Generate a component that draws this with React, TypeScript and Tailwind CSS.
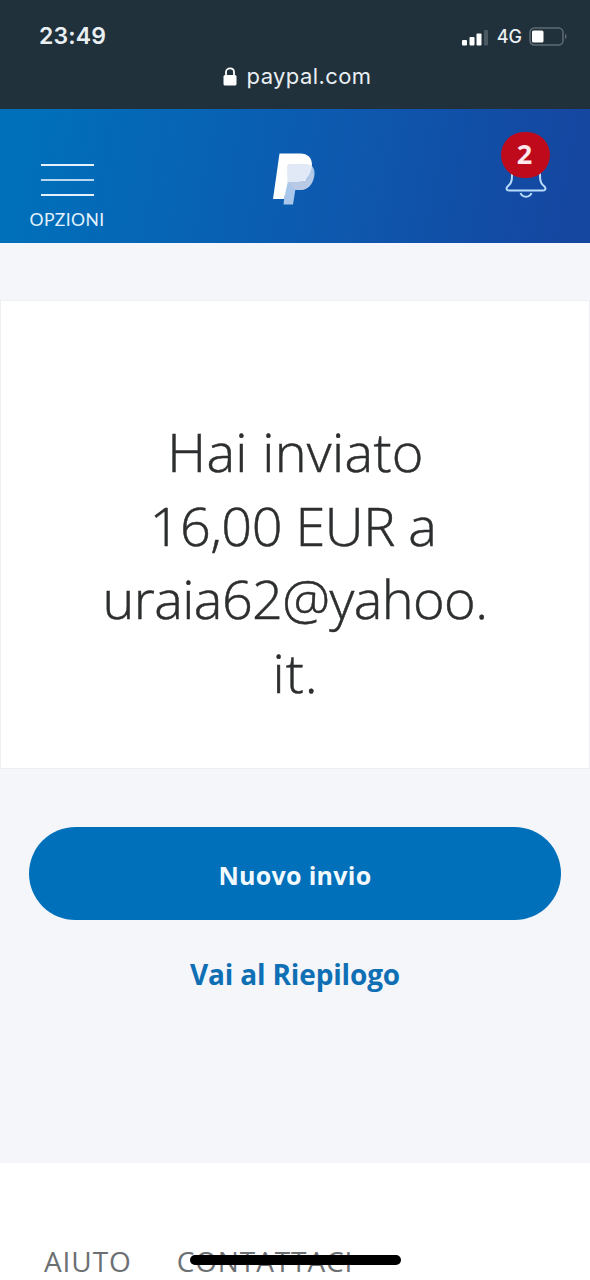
import React from 'react';

interface StatusBarProps {
  time: string;
  network: string;
}

const StatusBar: React.FC<StatusBarProps> = ({ time, network }) => (
  <div className="flex h-[109px] flex-col bg-[#21313c] text-[#e9eff3]">
    <div className="flex h-[58px] items-start justify-between pt-[22px] pr-[22px] pl-[39px]">
      <span className="font-['Inter'] text-[23px] leading-[28px] font-semibold tracking-[0.15px]">{time}</span>
      <div className="flex items-center pt-[3px]">
        <svg className="mr-[8px]" width="27" height="18" viewBox="0 0 27 18">
          <rect x="0" y="12" width="5" height="5.5" rx="1" fill="#fff" />
          <rect x="7.5" y="9" width="5" height="8.5" rx="1" fill="#fff" />
          <rect x="14.5" y="5.5" width="5" height="12" rx="1" fill="#fff" />
          <rect x="22" y="2" width="4" height="15.5" rx="1" fill="#4b5963" />
        </svg>
        <span className="pt-[1px] font-['Inter'] text-[18px] leading-[22px] font-medium">{network}</span>
        <svg className="ml-[7px]" width="39" height="19" viewBox="0 0 39 19">
          <rect x="1" y="1" width="33" height="17" rx="4.5" fill="none" stroke="#5f6b74" strokeWidth="1.5" />
          <rect x="3" y="3.5" width="11.5" height="12" rx="1.5" fill="#fff" />
          <path d="M36 7c2 .6 2 4.4 0 5z" fill="#5f6b74" />
        </svg>
      </div>
    </div>
    <div className="flex h-[36px] items-center justify-center gap-[10px] pl-[4px]">
      <svg width="14" height="19" viewBox="0 0 14 19">
        <path d="M3 9V5.2C3 .2 11 .2 11 5.2V9" fill="none" stroke="#fff" strokeWidth="1.8" />
        <rect x="0.5" y="8" width="13" height="10.5" rx="1.5" fill="#fff" />
      </svg>
      <span className="font-['Inter'] text-[22px] leading-[28px] tracking-[0.4px]">paypal.com</span>
    </div>
  </div>
);

const Logo = () => (
  <svg width="44" height="53" viewBox="0 0 44 53">
    <path d="M16 13h24c2.500 3 3 6 2.300 10-1.500 9-7 14-14 14h-5L21 51.500H11.500z" fill="#a9c7ea" />
    <path d="M16 29h13c5 0 8.500-4 10-9l3 1c-1 10-6.500 16-13.500 16h-5.500z" fill="#b7c9e4" />
    <path d="M7.500 0.500h21c7 0 11.500 4 11.500 11.500L33 28H16l-4 18H1z" fill="#fff" />
    <path d="M15 13c.5-1.300 1.500-2 3-2h15c3 0 5 .5 7 2-1.500 10-7 16-15 16h-9.500z" fill="#e1e9f6" />
  </svg>
);

const Header = ({ notifications }: { notifications: number }) => (
  <header className="flex h-[134px] items-start justify-between bg-linear-[100deg,#0070ba_4%,#0c5bb0_52%,#1546a0_97%] pr-[38px] pl-[29px]">
    <button className="flex w-[76px] flex-col items-center pt-[55px] text-[#e3f2fc]">
      <span className="flex flex-col gap-[13px]">
        <span className="h-[2px] w-[53px] bg-current" />
        <span className="h-[2px] w-[53px] bg-current opacity-80" />
        <span className="h-[2px] w-[53px] bg-current" />
      </span>
      <span className="mt-[14px] font-['Lato'] text-[17.5px] leading-[20px] tracking-[0.4px]">OPZIONI</span>
    </button>
    <div className="mr-[18px] pt-[44px]">
      <Logo />
    </div>
    <button className="relative mt-[23px] flex h-[66px] w-[52px] items-end justify-center">
      <svg width="42" height="38" viewBox="0 0 42 38" fill="none" stroke="#b9ddfa" strokeWidth="2">
        <path d="M7 12v4c0 5-1 8-4 10-2.500 2.500-1.500 4.500 1 4.500h34c2.500 0 3.500-2 1-4.500-3-2-4-5-4-10v-4" />
        <path d="M15.500 33c2 5 9 5 11 0" />
      </svg>
      <span className="absolute top-0 left-[1px] flex h-[46px] w-[49px] items-center justify-center rounded-full bg-[#bf0a1c] pr-[2px] pb-[3px] font-['Open_Sans'] text-[27px] leading-none font-bold text-[#fbe9ee]">
        {notifications}
      </span>
    </button>
  </header>
);

export default function App() {
  return (
    <div className="flex h-[1280px] w-[590px] flex-col overflow-hidden bg-[#f4f6fa]">
      <StatusBar time="23:49" network="4G" />
      <Header notifications={2} />

      <main className="flex h-[920px] flex-col pt-[57px]">
        <section className="h-[469px] border border-[#eeeff2] bg-white pt-[114px]">
          <h1 className="flex flex-col items-center font-['Open_Sans'] text-[54px] leading-[73.5px] font-light text-[#2c2e2f] [-webkit-text-stroke:0.5px]">
            <span className="pl-[1px] tracking-[0.3px]">Hai inviato</span>
            <span className="pr-[4px] tracking-[-0.5px]">16,00 EUR a</span>
            <span className="tracking-[-0.6px]">uraia62@yahoo.</span>
            <span className="pl-[1px] tracking-[1px]">it.</span>
          </h1>
        </section>

        <div className="flex flex-col items-center px-[29px] pt-[58px]">
          <button className="h-[93px] w-full rounded-full bg-[#0070ba] pt-[4px] font-['Open_Sans'] text-[25px] font-bold tracking-[0.3px] text-[#f2f9fd]">
            Nuovo invio
          </button>
          <a className="mt-[35px] font-['Open_Sans'] text-[28px] leading-[38px] font-bold tracking-[-0.15px] text-[#0f6fb5]">
            Vai al Riepilogo
          </a>
        </div>
      </main>

      <footer className="relative flex h-[117px] items-start gap-[45px] bg-white pt-[79px] pl-[44px] font-['Open_Sans'] text-[28px] leading-[38px] text-[#6c7073]">
        <span className="tracking-[0.9px]">AIUTO</span>
        <span className="tracking-[0.9px]">CONTATTACI</span>
        {/* home indicator */}
        <span className="absolute top-[92px] left-[190px] h-[10px] w-[211px] rounded-full bg-black" />
      </footer>
    </div>
  );
}
